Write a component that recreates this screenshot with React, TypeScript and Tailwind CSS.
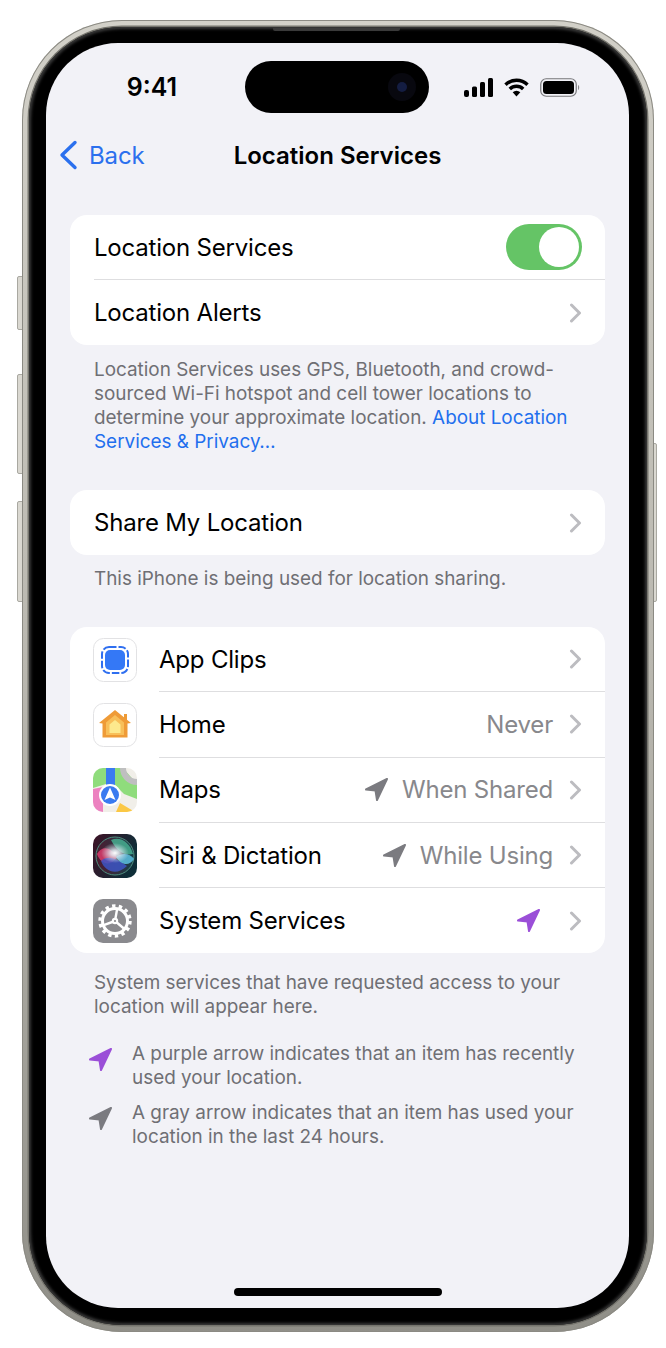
const Chevron = () => (
  <svg width="13" height="20" viewBox="0 0 13 20" className="shrink-0">
    <path d="M2.5 2 L10.5 10 L2.5 18" fill="none" stroke="#bcbcc0" strokeWidth="3" strokeLinecap="round" strokeLinejoin="round" />
  </svg>
);

const LocationArrow = ({ color, className }: { color: string; className?: string }) => (
  <svg width="25" height="25" viewBox="0 0 25 25" className={className}>
    <path
      d="M23 2 L2 12.5 L11.5 13.6 L13 23 Z"
      fill={color}
      stroke={color}
      strokeWidth="2"
      strokeLinejoin="round"
    />
  </svg>
);

const AppClipsIcon = () => (
  <svg width="44" height="44" viewBox="0 0 44 44">
    <rect x="0.5" y="0.5" width="43" height="43" rx="10" fill="#fff" stroke="#e2e2e4" />
    <rect x="9" y="9" width="26" height="26" rx="7" fill="none" stroke="#2f6ff0" strokeWidth="2" strokeDasharray="7.5 2" />
    <rect x="12" y="12" width="20" height="20" rx="5" fill="#3478f6" />
  </svg>
);

const HomeIcon = () => (
  <svg width="44" height="44" viewBox="0 0 44 44">
    <rect x="0.5" y="0.5" width="43" height="43" rx="10" fill="#fff" stroke="#e2e2e4" />
    <path d="M31 11 h3 v7 h-3 z" fill="#ee9a35" />
    <path d="M22 7 L38 20 L34.5 20.5 V34.5 H9.5 V20.5 L6 20 Z" fill="#ef9b37" strokeLinejoin="round" />
    <path d="M22 12 L31 19.5 V32 H13 V19.5 Z" fill="#f8bf59" />
    <path d="M22 17 L27.5 21.5 V30 H16.5 V21.5 Z" fill="#fde98d" />
  </svg>
);

const MapsIcon = () => (
  <svg width="44" height="44" viewBox="0 0 44 44">
    <defs>
      <clipPath id="maps-clip">
        <rect width="44" height="44" rx="10" />
      </clipPath>
    </defs>
    <g clipPath="url(#maps-clip)">
      <rect width="44" height="44" fill="#f1efe9" />
      <path d="M0 0 H13 V16 L0 20 Z" fill="#8fdc7c" />
      <path d="M22 0 H30 L44 16 V31 L31 26 L22 17 Z" fill="#8fdc7c" />
      <path d="M0 21 L10 19 V44 H0 Z" fill="#ec82c0" />
      <path d="M23 44 L27 35 L42 44 Z" fill="#fbc845" />
      <path d="M27 0 A17 17 0 0 0 44 17 V11 A11 11 0 0 1 33 0 Z" fill="#bfbfc0" />
      <rect x="13" y="0" width="9" height="20" fill="#3a7bf0" />
      <circle cx="17" cy="27" r="11" fill="#fff" />
      <circle cx="17" cy="27" r="9" fill="#3a7bf0" />
      <path d="M17 19.5 L22.5 32 L17 29.5 L11.5 32 Z" fill="#fff" />
    </g>
  </svg>
);

const SiriIcon = () => (
  <svg width="44" height="44" viewBox="0 0 44 44">
    <defs>
      <radialGradient id="siri-flare" cx="0.5" cy="0.5" r="0.5">
        <stop offset="0" stopColor="#fff" />
        <stop offset="0.3" stopColor="#e6eff5" stopOpacity="0.85" />
        <stop offset="1" stopColor="#d8e6f0" stopOpacity="0" />
      </radialGradient>
      <linearGradient id="siri-bg" x1="0" y1="0" x2="1" y2="0.4">
        <stop offset="0" stopColor="#3d1226" />
        <stop offset="1" stopColor="#0e2e38" />
      </linearGradient>
      <linearGradient id="siri-orb" x1="0" y1="0" x2="1" y2="0">
        <stop offset="0" stopColor="#4e1a30" />
        <stop offset="1" stopColor="#17414a" />
      </linearGradient>
    </defs>
    <rect width="44" height="44" rx="10" fill="url(#siri-bg)" />
    <circle cx="22" cy="22" r="19" fill="url(#siri-orb)" stroke="#4f8f80" strokeWidth="1" />
    <path d="M4 20 C9 11 18 13 24 23 C18 33 8 31 4 20 Z" fill="#d13a68" opacity="0.9" />
    <path d="M8 27 C15 20 25 25 34 32 C24 42 12 38 8 27 Z" fill="#3d55c4" opacity="0.85" />
    <path d="M18 6 C28 2 37 9 40 20 C32 22 24 18 18 6 Z" fill="#48b595" opacity="0.8" />
    <path d="M23 23 C30 18 37 20 41 25 C36 33 28 31 23 23 Z" fill="#5dc1e2" opacity="0.85" />
    <ellipse cx="22" cy="19" rx="14" ry="10" fill="url(#siri-flare)" />
  </svg>
);

const SystemServicesIcon = () => (
  <svg width="44" height="44" viewBox="0 0 44 44">
    <rect width="44" height="44" rx="10" fill="#8a8a8e" />
    <circle cx="22" cy="22" r="12.5" fill="none" stroke="#fff" strokeWidth="3" />
    <circle cx="22" cy="22" r="15" fill="none" stroke="#fff" strokeWidth="3.4" strokeDasharray="3.4 3.33" />
    <path d="M22 22 L22 10 M22 22 L32.4 28 M22 22 L11.6 28" transform="rotate(-110 22 22)" stroke="#fff" strokeWidth="2.4" />
    <circle cx="22" cy="22" r="3.2" fill="#fff" />
    <circle cx="22" cy="22" r="1.1" fill="#8a8a8e" />
  </svg>
);

const StatusIcons = () => (
  <div className="flex items-center">
    <svg width="29" height="19" viewBox="0 0 29 19">
      <rect x="0" y="12" width="5" height="7" rx="2" fill="#000" />
      <rect x="8" y="8.5" width="5" height="10.5" rx="1.5" fill="#000" />
      <rect x="16" y="4" width="5" height="15" rx="1.5" fill="#000" />
      <rect x="24" y="0" width="5" height="19" rx="1.5" fill="#000" />
    </svg>
    <svg width="25" height="19" viewBox="0 0 25 19" className="ml-[11px]">
      <path d="M1.5 6.8 A15.5 15.5 0 0 1 23.5 6.8" fill="none" stroke="#000" strokeWidth="3.4" />
      <path d="M5.8 11 A9.5 9.5 0 0 1 19.2 11" fill="none" stroke="#000" strokeWidth="3.4" />
      <path d="M8.7 14.2 A5.4 5.4 0 0 1 16.3 14.2 L12.5 18.5 Z" fill="#000" />
    </svg>
    <svg width="41" height="19" viewBox="0 0 41 19" className="ml-[11px]">
      <rect x="0.75" y="0.75" width="35.5" height="17.5" rx="5.5" fill="none" stroke="#77777a" strokeWidth="1.2" />
      <rect x="3" y="3" width="31" height="13" rx="3.5" fill="#000" />
      <path d="M38 7 C39.6 7.5 39.6 11.5 38 12 Z" fill="#8a8a8e" />
    </svg>
  </div>
);

type Row = {
  label: string;
  icon?: React.ReactNode;
  value?: string;
  arrow?: string;
};

const appRows: Row[] = [
  { label: 'App Clips', icon: <AppClipsIcon /> },
  { label: 'Home', icon: <HomeIcon />, value: 'Never' },
  { label: 'Maps', icon: <MapsIcon />, value: 'When Shared', arrow: '#7b7b80' },
  { label: 'Siri & Dictation', icon: <SiriIcon />, value: 'While Using', arrow: '#7b7b80' },
  { label: 'System Services', icon: <SystemServicesIcon />, arrow: '#9b4fd8' },
];

function ListRow({ row, last }: { row: Row; last: boolean }) {
  return (
    <div className="flex h-[65.3px] items-center pl-[23px]">
      <div className="mr-[22px] h-[44px] w-[44px] shrink-0">{row.icon}</div>
      <div className={`flex h-full flex-1 items-center pr-[23px] ${last ? '' : 'border-b border-[#dedee0]'}`}>
        <span className="flex-1 pt-[1px] text-[24px] tracking-[-0.2px] text-black">{row.label}</span>
        {row.arrow && <LocationArrow color={row.arrow} className={row.value ? 'mr-[13px]' : 'mr-[28px]'} />}
        {row.value && <span className="mr-[16px] pt-[1px] text-[24px] tracking-[-0.2px] text-[#88888c]">{row.value}</span>}
        <Chevron />
      </div>
    </div>
  );
}

export default function App() {
  return (
    <div className="relative h-[1348px] w-[666px] overflow-hidden bg-white pl-[22px] pt-[20px] [font-family:Inter,sans-serif]">
      {/* side buttons */}
      <div className="absolute left-[17px] top-[276px] h-[54px] w-[6px] rounded-l-[2px] border border-[#a9a8a1] bg-[#dad8d1]" />
      <div className="absolute left-[17px] top-[374px] h-[100px] w-[6px] rounded-l-[2px] border border-[#a9a8a1] bg-[#dad8d1]" />
      <div className="absolute left-[17px] top-[501px] h-[101px] w-[6px] rounded-l-[2px] border border-[#a9a8a1] bg-[#dad8d1]" />
      <div className="absolute left-[652px] top-[443px] h-[159px] w-[5px] rounded-r-[2px] border border-[#a9a8a1] bg-[#dad8d1]" />

      {/* phone frame */}
      <div className="relative h-[1312px] w-[632px] rounded-[100px] bg-gradient-to-b from-[#d2d0c8] via-[#b9b7af] to-[#908f88] p-[7px] shadow-[inset_0_0_0_1px_#8b8a83]">
        <div className="relative h-full w-full rounded-[93px] bg-black pb-[17px] pl-[17px] pr-[18px] pt-[16px] shadow-[0_0_0_1.5px_#75746d,inset_0_0_3px_2px_#3a3a3a]">
          <div className="absolute left-[244px] top-[1px] h-[3px] w-[127px] rounded-b-[2px] bg-[#3a3a3a]" />
          <div className="flex h-full w-full flex-col rounded-[72px] bg-[#f2f2f7]">
            {/* status bar */}
            <div className="mt-[18px] flex h-[52px] items-center">
              <div className="w-[199px] pl-[13px] text-center text-[25px] font-semibold leading-none text-black">9:41</div>
              <div className="relative h-[52px] w-[184px] rounded-full bg-black">
                <div className="absolute right-[13px] top-[12px] h-[28px] w-[28px] rounded-full bg-[#08080f]">
                  <div className="m-[9px] h-[10px] w-[10px] rounded-full bg-[#141d42]" />
                </div>
              </div>
              <div className="pl-[35px]">
                <StatusIcons />
              </div>
            </div>

            {/* nav bar */}
            <div className="mt-[17px] grid h-[50px] grid-cols-[1fr_auto_1fr] items-center">
              <div className="flex items-center pl-[13px] text-[24px] tracking-[-0.1px] text-[#2b70ee]">
                <svg width="19" height="30" viewBox="0 0 19 30">
                  <path d="M16 2.5 L3 15 L16 27.5" fill="none" stroke="#2b70ee" strokeWidth="3.4" strokeLinecap="round" strokeLinejoin="round" />
                </svg>
                <span className="ml-[11px] pt-[1px]">Back</span>
              </div>
              <div className="pt-[1px] text-[24px] font-semibold text-black">Location Services</div>
              <div />
            </div>

            <div className="mt-[35px] px-[24px]">
              <div className="overflow-hidden rounded-[17px] bg-white">
                <div className="ml-[24px] flex h-[65px] items-center border-b border-[#dedee0] pr-[23px]">
                  <span className="flex-1 pt-[1px] text-[24px] tracking-[-0.2px] text-black">Location Services</span>
                  <div className="flex h-[46px] w-[76px] items-center justify-end rounded-full bg-[#65c466] pr-[3px]">
                    <div className="h-[40px] w-[40px] rounded-full bg-white" />
                  </div>
                </div>
                <div className="ml-[24px] flex h-[65px] items-center pr-[23px]">
                  <span className="flex-1 pt-[1px] text-[24px] tracking-[-0.2px] text-black">Location Alerts</span>
                  <Chevron />
                </div>
              </div>
              <p className="mt-[13px] px-[24px] text-[18.9px] leading-[24px] text-[#6f6f74]">
                Location Services uses GPS, Bluetooth, and crowd-sourced Wi-Fi hotspot and cell tower locations to determine your approximate location.{' '}
                <span className="text-[#1f6fee]">About Location Services &amp; Privacy…</span>
              </p>

              <div className="mt-[36px] rounded-[17px] bg-white">
                <div className="ml-[24px] flex h-[65px] items-center pr-[23px]">
                  <span className="flex-1 pt-[1px] text-[24px] tracking-[-0.2px] text-black">Share My Location</span>
                  <Chevron />
                </div>
              </div>
              <p className="mt-[12px] px-[24px] text-[18.9px] leading-[24px] text-[#6f6f74]">
                This iPhone is being used for location sharing.
              </p>

              <div className="mt-[36px] rounded-[17px] bg-white">
                {appRows.map((row, i) => (
                  <ListRow key={row.label} row={row} last={i === appRows.length - 1} />
                ))}
              </div>
              <p className="mt-[18px] px-[24px] text-[18.9px] leading-[24px] text-[#6f6f74]">
                System services that have requested access to your location will appear here.
              </p>

              <div className="mt-[23px] flex pl-[18px] pr-[24px]">
                <LocationArrow color="#9b4fd8" className="mt-[5px] shrink-0" />
                <p className="ml-[19px] text-[18.9px] leading-[24px] text-[#6f6f74]">
                  A purple arrow indicates that an item has recently used your location.
                </p>
              </div>
              <div className="mt-[11px] flex pl-[18px] pr-[24px]">
                <LocationArrow color="#7b7b80" className="mt-[5px] shrink-0" />
                <p className="ml-[19px] text-[18.9px] leading-[24px] text-[#6f6f74]">
                  A gray arrow indicates that an item has used your location in the last 24 hours.
                </p>
              </div>
            </div>

            {/* home indicator */}
            <div className="mx-auto mb-[12px] mt-auto h-[8px] w-[208px] rounded-full bg-black" />
          </div>
        </div>
      </div>
    </div>
  );
}
